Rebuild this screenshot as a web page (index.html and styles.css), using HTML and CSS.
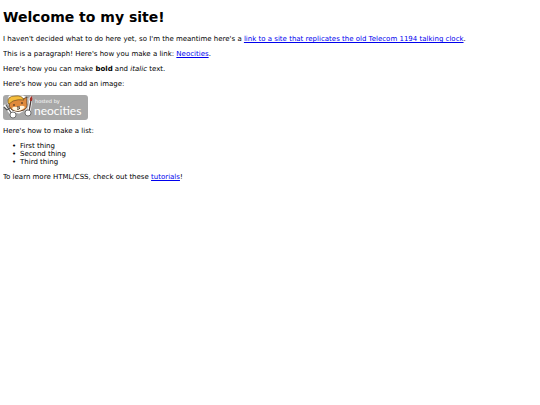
FILE: index.html
```html
<!DOCTYPE html>
<html lang="en">
<head>
  <meta charset="UTF-8">
  <meta name="viewport" content="width=device-width, initial-scale=1.0">
  <title>My site</title>
  <link rel="stylesheet" href="styles.css">
</head>
<body>
  <h1>Welcome to my site!</h1>

  <p>I haven't decided what to do here yet, so I'm the meantime here's a <a href="#clock">link to a site that replicates the old Telecom 1194 talking clock</a>.</p>

  <p>This is a paragraph! Here's how you make a link: <a href="#neocities">Neocities</a>.</p>

  <p>Here's how you can make <strong>bold</strong> and <em>italic</em> text.</p>

  <p>Here's how you can add an image:</p>

  <svg class="badge" viewBox="0 0 85 25" role="img" aria-label="Hosted by Neocities">
    <rect x="0" y="0" width="85" height="25" rx="3" fill="#a8a8a8"/>
    <!-- white halo around the cat -->
    <path d="M7 2L20 2L24 4L23 13L16 17L9 15L6 8ZM2 11L9 19M28 3L26 17" fill="#fff" stroke="#fff" stroke-width="3" stroke-linejoin="round" stroke-linecap="round"/>
    <!-- fork -->
    <path d="M1 12L4 15L7 13M3 10L9 19" fill="none" stroke="#555" stroke-width="1.2"/>
    <!-- brush -->
    <path d="M28 5L26 17" stroke="#4c3a38" stroke-width="1.3"/>
    <path d="M27 6Q26 3 29 1Q30 4 29 6Z" fill="#a52f27"/>
    <!-- head -->
    <path d="M6 7L7 3L20 4L24 2L24 8Q25 13 21 15Q15 18 9 15Q5 12 6 7Z" fill="#e08a3c" stroke="#3c2e24" stroke-width=".8"/>
    <path d="M5 8Q4 1 12 1Q19 0 21 5Q15 4 10 6L6 9Z" fill="#f5bd3c" stroke="#6e5020" stroke-width=".7"/>
    <path d="M9 13Q11 11 14 12L17 11Q20 10 22 12Q20 15 15 16Q10 16 9 13Z" fill="#fff5df"/>
    <path d="M11 9V11M19 7V9M14 12H17M14 14Q15 15 17 13" fill="none" stroke="#32241e" stroke-width="1"/>
    <!-- paws -->
    <circle cx="10" cy="20" r="3" fill="#fff" stroke="#555" stroke-width=".8"/>
    <circle cx="25" cy="18" r="3" fill="#fff" stroke="#555" stroke-width=".8"/>
    <text x="32" y="8" class="badge-small">hosted by</text>
    <text x="31" y="20" class="badge-name">neocities</text>
  </svg>

  <p>Here's how to make a list:</p>

  <ul>
    <li>First thing</li>
    <li>Second thing</li>
    <li>Third thing</li>
  </ul>

  <p>To learn more HTML/CSS, check out these <a href="#tutorials">tutorials</a>!</p>
</body>
</html>
```
FILE: styles.css
```css
body {
  margin: 9px 3px;
  background-color: #fff;
  color: #000;
  font-family: Verdana, "DejaVu Sans", sans-serif;
  font-size: 7px;
  line-height: 8px;
}

h1 {
  margin: 0 0 9px;
  font-size: 14px;
  line-height: 17px;
}

p, ul {
  margin: 7px 0;
}

ul {
  padding-left: 9px;
  list-style: none;
}

li {
  display: flex;
}

li::before {
  content: "•";
  width: 8px;
}

a {
  color: #0000ee;
}

/* hosting badge */
.badge {
  display: block;
  width: 85px;
  height: 25px;
}

.badge-small {
  fill: #fff;
  font-family: "DejaVu Sans", sans-serif;
  font-size: 5px;
}

.badge-name {
  fill: #fff;
  font-family: Lato, sans-serif;
  font-size: 12px;
}
```
